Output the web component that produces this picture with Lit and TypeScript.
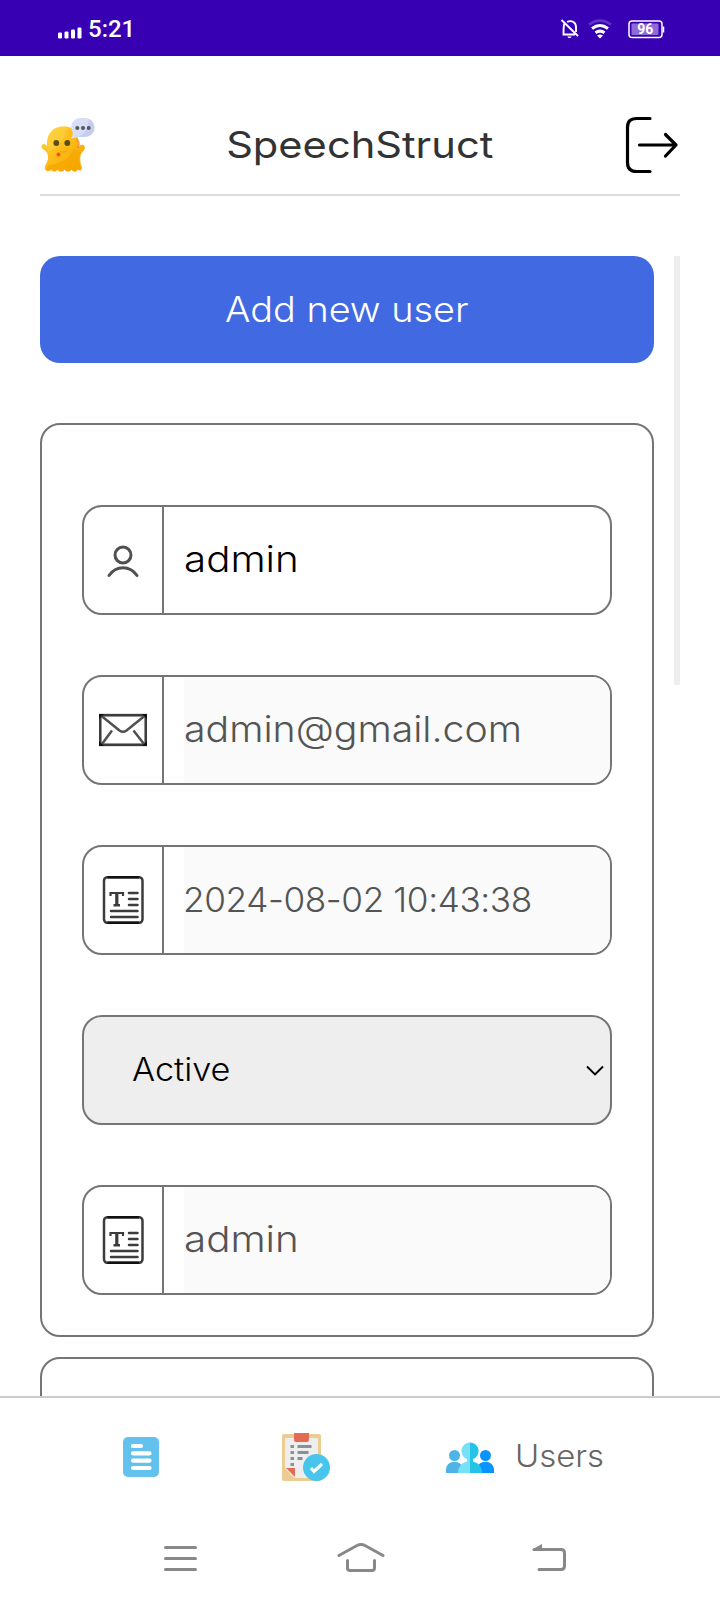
import { LitElement, html, css, svg } from "lit";
import { customElement, property } from "lit/decorators.js";

const userIcon = svg`<svg width="48" height="48" viewBox="0 0 48 48" fill="none" stroke="#505050" stroke-width="3" stroke-linecap="round">
  <circle cx="24" cy="19" r="8"/><path d="M10 39.500C17 29 31 29 38 39.500"/></svg>`;
const mailIcon = svg`<svg width="48" height="48" viewBox="0 0 48 48" fill="none" stroke="#3c3c3c" stroke-width="2.500">
  <rect x="1.200" y="9.200" width="45.600" height="29.600" stroke-width="2.700"/><path d="M2.500 10 20.500 24.500Q24 27 27.500 24.500L45.500 10M3 38 13 24.500M45 38 34.500 24.500" stroke="#505050"/>
  <path d="M0 8h5l-5 5zM48 8h-5l5 5zM0 40h5l-5-5zM48 40h-5l5-5z" fill="#111" stroke="none"/></svg>`;
const docIcon = svg`<svg width="48" height="48" viewBox="0 0 48 48" fill="none" stroke="#3c3c3c" stroke-width="2.500">
  <rect x="5" y="1.200" width="38.500" height="45.600" rx="3.500"/>
  <path d="M8.500 1.200h31.500M8.500 46.800h31.500" stroke="#111"/>
  <path d="M11.500 20v-3h12.500v3" stroke-width="2.200"/><path d="M17.800 17v12" stroke-width="3.200"/><path d="M14.500 29.300h6.500"/>
  <path d="M30 17h8.500M30 23h8.500M30 29h8.500M12 35H38.500M12 41H38.500" stroke-linecap="round"/></svg>`;

const icons: Record<string, unknown> = { user: userIcon, mail: mailIcon, doc: docIcon };

@customElement("icon-field")
class IconField extends LitElement {
  @property() icon = "doc";
  @property() value = "";
  @property() kind = "word";
  @property({ type: Boolean }) locked = false;
  static styles = css`
    :host { display: block; }
    .field { box-sizing: border-box; height: 110px; display: flex; border: 2px solid #757575; border-radius: 20px; overflow: hidden; background: #fff; }
    .icon { width: 78px; border-right: 2px solid #757575; display: flex; align-items: center; justify-content: center; }
    .icon svg { display: block; }
    .value { flex: 1; margin-left: 20px; display: flex; align-items: center; font-size: 36px; font-weight: 300; color: #000; white-space: nowrap; padding-bottom: 2px; }
    .value span { transform-origin: left center; }
    .locked { background: #fafafa; color: #545454; }
    .word span { transform: scaleX(1.12); }
    .email span { transform: scaleX(1.09); }
    .date { letter-spacing: -0.4px; font-size: 34.500px; }
    .date span { transform: scaleX(1.02); margin-left: -1.500px; }
  `;
  render() {
    return html`<div class="field"><div class="icon">${icons[this.icon]}</div>
      <div class="value ${this.kind} ${this.locked ? "locked" : ""}"><span>${this.value}</span></div></div>`;
  }
}

@customElement("app-root")
class AppRoot extends LitElement {
  static styles = css`
    :host { display: flex; flex-direction: column; height: 1600px; width: 720px; overflow: hidden; background: #fff; font-family: Inter, sans-serif; }
    svg { display: block; flex: none; }
    .status { height: 56px; flex: none; box-sizing: border-box; background: #3700b3; color: #fff; display: flex; align-items: center; padding: 1px 55px 0 58px; font-family: Roboto, sans-serif; }
    .time { font-size: 24px; font-weight: 500; margin-left: 5px; flex: 1; }
    .bell { margin-right: 8px; }
    .wifi { margin-right: 16px; }
    .header { height: 140px; flex: none; box-sizing: border-box; margin: 0 40px; padding-top: 40px; border-bottom: 2px solid #ddd; display: flex; align-items: center; justify-content: space-between; }
    .title { margin: 0; font-size: 37px; font-weight: 400; line-height: 50px; color: #333; transform: scaleX(1.125); }
    .scroll { flex: 1; min-height: 0; overflow: hidden; margin: 60px 40px 0; display: flex; justify-content: space-between; }
    .list { width: 614px; }
    .thumb { width: 6px; height: 429px; background: #eee; }
    .add { height: 107px; box-sizing: border-box; padding-bottom: 1px; border-radius: 20px; background: #4169e1; color: #fff; font-size: 35px; font-weight: 300; display: flex; align-items: center; justify-content: center; }
    .add span { transform: scaleX(1.08); }
    .card { box-sizing: border-box; border: 2px solid #757575; border-radius: 20px; padding: 80px 40px 40px; margin-top: 60px; display: flex; flex-direction: column; gap: 60px; }
    .next { margin-top: 20px; height: 300px; }
    .select { box-sizing: border-box; height: 110px; border: 2px solid #757575; border-radius: 20px; background: #eee; display: flex; align-items: center; justify-content: space-between; padding: 0 6px 2px 48px; font-size: 32px; font-weight: 300; }
    .select span { transform: scaleX(1.07); transform-origin: left center; }
    .select svg { margin-top: 3px; }
    .tabs { height: 120px; flex: none; box-sizing: border-box; border-top: 2px solid #ccc; display: flex; align-items: center; padding: 0 0 0 117px; }
    .clip { margin-left: 117px; }
    .people { margin-left: 116px; }
    .tab { font-size: 31px; font-weight: 300; margin-left: 21px; padding-bottom: 3px; color: #666; transform: scaleX(1.06); transform-origin: left center; }
    .nav { height: 84px; flex: none; box-sizing: border-box; display: flex; justify-content: space-between; align-items: center; padding: 0 150px 0 160px; }
    .home { margin-right: 8px; }
  `;

  render() {
    return html`
      <div class="status">
        <svg width="25" height="24" viewBox="0 2.500 25 24" fill="#fff"><rect y="18" width="4" height="6" rx="1.300"/><rect x="6.500" y="17" width="4" height="7" rx="1.300"/><rect x="13" y="15" width="4" height="9" rx="1.300"/><rect x="19.500" y="13" width="4" height="11" rx="1.300"/></svg>
        <span class="time">5:21</span>
        <svg class="bell" width="20" height="20" viewBox="0 0 20 20" fill="none" stroke="#fff" stroke-width="1.900"><path d="M1.500 1 18 17M4.500 4.500C3.500 6 3.500 7 3.500 15.500H15M7 3C12 .500 16 4 16 8v5"/><path d="M7.500 17.500h4c-.5 2-3.500 2-4 0z" fill="#fff" stroke="none"/></svg>
        <svg class="wifi" width="24" height="20" viewBox="0 0 24 20" fill="none" stroke="#fff" stroke-width="3"><path d="M1 5.500Q12-2.500 23 5.500" stroke="#6234c5" stroke-width="2.600"/><path d="M4 9.500Q12 3.500 20 9.500M7.500 13.800Q12 10.500 16.500 13.800"/><path d="M9 16.500Q12 14.500 15 16.500L12 19.500z" fill="#fff" stroke="none"/></svg>
        <svg width="37" height="20" viewBox="0 0 37 20"><rect x="1" y="2" width="33" height="16.500" rx="3" fill="none" stroke="#fff" stroke-width="1.500"/><rect x="3.500" y="4.500" width="27" height="11.500" rx="1" fill="#8e6bd5"/><path d="M35.500 7.500v6" stroke="#fff" stroke-width="1.500"/><text x="17.300" y="15.300" fill="#fff" font-family="Roboto, sans-serif" font-weight="700" font-size="14" text-anchor="middle">96</text></svg>
      </div>
      <div class="header">
        <svg width="56" height="56" viewBox="0 0 56 56">
          <defs><linearGradient id="g" x2="1" y2="1"><stop stop-color="#ffd33e"/><stop offset=".5" stop-color="#fdbb16"/><stop offset="1" stop-color="#f5a000"/></linearGradient></defs>
          <path d="M24 9.500C12.500 9.500 7 17 7 26.500v3C6 27 3.500 26 2 28c-1.400 2 .300 4 2 5 3.300 2 4 4 4 8 0 5-4 7-3 11 1.300 3 4 2.500 6 .500 2 3 4.500 3 6.500 0 2 3 5 3 7 0 2 3 5 3 7 0 2 3 4.500 3 6 0 3 2 4.300 1 3.800-2-1.500-3-2-7-1.500-11 .5-3 2.500-4 4-6 1.500-1.500 1.500-4.500-.500-5.500-2-.500-3.500.500-4.500 2 0-12-3-20.500-14.800-20.500z" fill="url(#g)"/>
          <path d="M7.500 26C7.500 14 17 8 27 10c-1 11-8 19-19 25z" fill="#ffda50" opacity=".4"/>
          <path d="M34 31c-4 11-14 16-25 17l-3 4q3 3 6 0 3 4 6.500 0 3.500 4 7 0 3.500 4 7 0 3 4 5.500 0c3 2 4 1 4-2-2-4-2-8-1-14z" fill="#f5a500" opacity=".7"/>
          <path d="M37 22q4 6 0 9" fill="none" stroke="#f47b35" stroke-width="2" opacity=".6"/>
          <circle cx="16.300" cy="26" r="2.900" fill="#594c19"/><circle cx="27.300" cy="26" r="2.900" fill="#594c19"/>
          <path d="M20 34.500q5 1.500 7.500-1.500" fill="none" stroke="#e3a31b" stroke-width="1"/><circle cx="18.500" cy="37.500" r="2" fill="#f4511e"/>
          <path d="M41 1h4a9.300 9.300 0 0 1 0 19h-7q-3 .500-7 1.500 2.500-4 1.500-6.500C29 7 34 1 41 1z" fill="#d9def7"/><path d="M45 1a9.300 9.300 0 0 1 0 19h-7q10-4 11-18z" fill="#c6cef0"/>
          <g fill="#55545f"><circle cx="37.300" cy="11" r="2"/><circle cx="43" cy="11" r="2"/><circle cx="48.700" cy="11" r="2"/></g>
        </svg>
        <h1 class="title">SpeechStruct</h1>
        <svg width="56" height="58" viewBox="0 0 56 58" fill="none" stroke="#000" stroke-width="3.200" stroke-linecap="round" stroke-linejoin="round"><path d="M26 2.500H12.500Q3.500 2.500 3.500 11.500V46.500Q3.500 55.500 12.500 55.500H26M15.500 29H52M41.500 18.500 52 29 41.500 40"/></svg>
      </div>
      <div class="scroll">
        <div class="list">
          <div class="add"><span>Add new user</span></div>
          <div class="card">
            <icon-field icon="user" value="admin"></icon-field>
            <icon-field icon="mail" kind="email" value="admin@gmail.com" locked></icon-field>
            <icon-field kind="date" value="2024-08-02 10:43:38" locked></icon-field>
            <div class="select"><span>Active</span><svg width="18" height="12" viewBox="0 0 18 12" fill="none" stroke="#000" stroke-width="1.900"><path d="M1 1.500 9 9.500 17 1.500"/></svg></div>
            <icon-field value="admin" locked></icon-field>
          </div>
          <div class="card next"></div>
        </div>
        <div class="thumb"></div>
      </div>
      <div class="tabs">
        <svg width="48" height="48" viewBox="0 0 48 48"><rect x="6" y="4" width="36" height="40" rx="5" fill="#63c1ee"/><path d="M16 13h8M16 20.300h16.500M16 27.600h16.500M16 35h16.500" stroke="#fff" stroke-width="4.200" stroke-linecap="round"/></svg>
        <svg class="clip" width="48" height="48" viewBox="0 0 48 48"><rect y="1" width="39" height="47" rx="2" fill="#ebcd91"/><path d="M3 5H36V45H12L3 35z" fill="#eee"/><path d="M4 35h9v9z" fill="#e56a54"/><path d="M12 0h15v7q0 2-2 2H14q-2 0-2-2z" fill="#e56a54"/><path d="M8.500 13.500h3.500M8.500 19.500h3.500M8.500 25.500h3.500M8.500 31.500h3.500M15.500 13.500h14M15.500 19.500h11M15.500 25.500h5" stroke="#839399" stroke-width="2.800"/><circle cx="34.500" cy="34.500" r="13.500" fill="#48c5ec"/><path d="M29 35l3 3.500 8-7.500" fill="none" stroke="#fff" stroke-width="3.200"/></svg>
        <svg class="people" width="48" height="48" viewBox="0 -1 48 48"><g fill="#4db4e7"><circle cx="8.500" cy="21.500" r="5.500"/><path d="M0 39v-3c0-11 17-11 17 0v3z"/></g><g fill="#0894ff"><circle cx="39.500" cy="21.500" r="5.500"/><path d="M31 39v-3c0-11 17-11 17 0v3z"/></g><path d="M24 8.500a8.500 8.500 0 0 0-3 16.500v2.500q-9 2-9 11.500h12z" fill="#76e2f8"/><path d="M24 8.500a8.500 8.500 0 0 1 3 16.500v2.500q9 2 9 11.500H24z" fill="#25c3e8"/></svg>
        <span class="tab">Users</span>
      </div>
      <div class="nav">
        <svg width="40" height="32" viewBox="0 0 40 32" stroke="#888" stroke-width="3" stroke-linecap="round"><path d="M5.500 5.500h30M5.500 16.500h30M5.500 27.500h30"/></svg>
        <svg class="home" width="50" height="32" viewBox="0 0 50 32" fill="none" stroke="#888" stroke-width="3" stroke-linecap="round" stroke-linejoin="round"><path d="M3 13.500 21 3.500Q25 1.500 29 3.500L47 13.500M11.500 18.500v7.500Q11.500 28.500 14 28.500H36Q38.500 28.500 38.500 26V18.500"/></svg>
        <svg width="40" height="32" viewBox="0 0 40 32" fill="none" stroke="#888" stroke-width="3" stroke-linecap="round"><path d="M4 7.500H31Q34.500 7.500 34.500 11V24Q34.500 27.500 31 27.500H9"/><path d="M2 7.500 12 2V8z" fill="#888" stroke="none"/></svg>
      </div>`;
  }
}
